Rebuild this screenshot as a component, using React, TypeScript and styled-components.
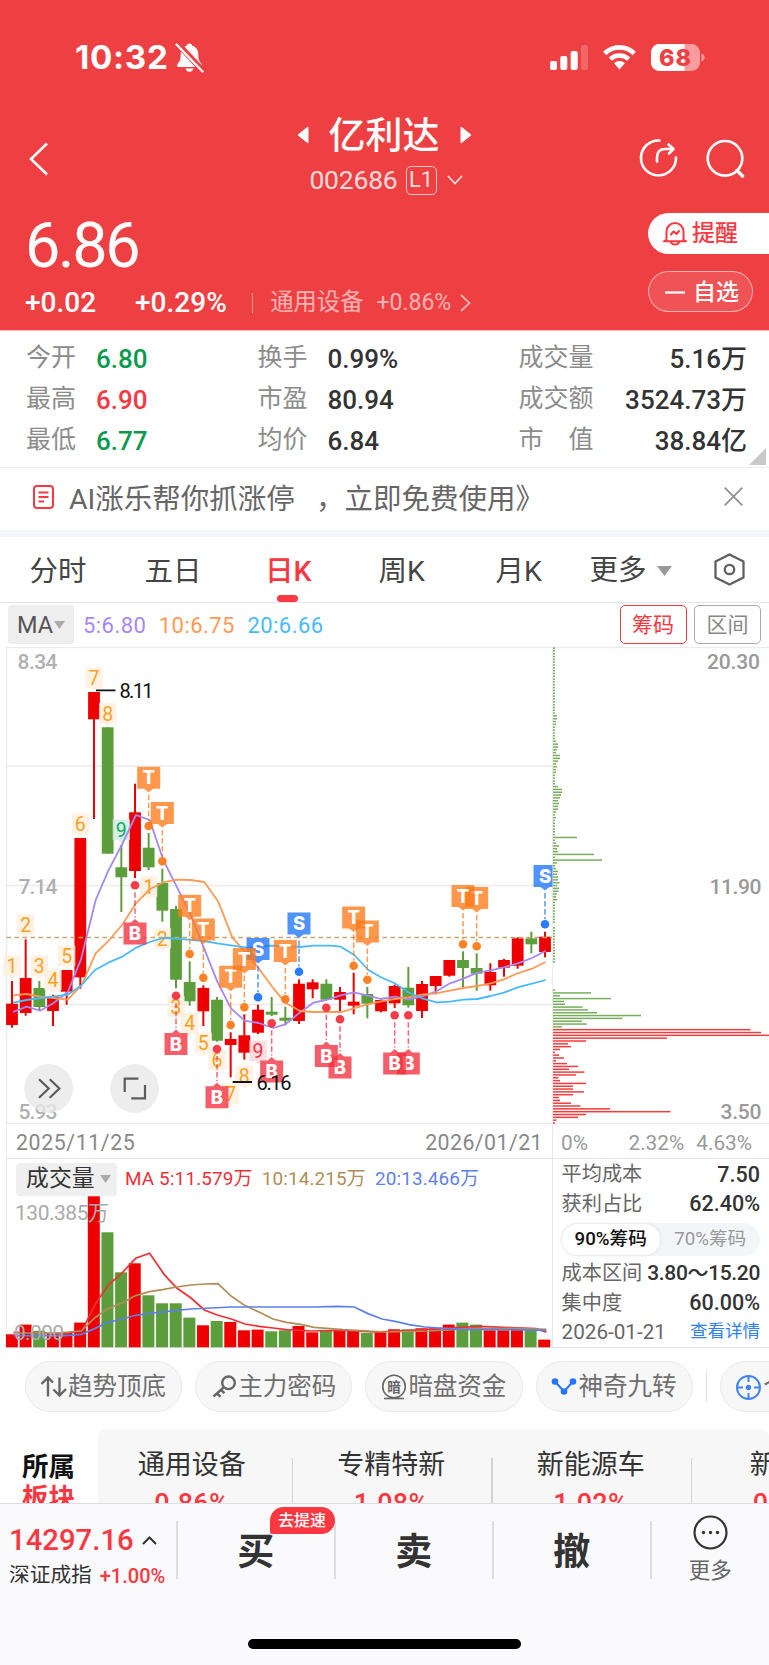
import React from "react";
import styled, { createGlobalStyle } from "styled-components";

const FONT = `Roboto, "Noto Sans CJK SC", sans-serif`;
const RED = "#ee4042";
const UP = "#f93842";
const BAR_UP = "#ee0000";
const BAR_DOWN = "#5d9e3c";

const Global = createGlobalStyle`
  * { box-sizing: border-box; }
  body { margin: 0; background: #fff; font-family: ${FONT}; }
  svg { display: block; flex: none; }
`;

const Page = styled.div`
  width: 769px;
  height: 1665px;
  overflow: hidden;
  display: flex;
  flex-direction: column;
  background: #fff;
  color: #333;
`;

type TextProps = { $size: number; $color?: string; $weight?: number; $ls?: number; $ml?: number };
const Text = styled.span<TextProps>`
  font-size: ${(p) => p.$size}px;
  line-height: 1;
  color: ${(p) => p.$color ?? "inherit"};
  font-weight: ${(p) => p.$weight ?? 400};
  letter-spacing: ${(p) => p.$ls ?? 0}px;
  margin-left: ${(p) => p.$ml ?? 0}px;
  white-space: pre;
`;

/* ---------- header ---------- */
const Header = styled.header`
  height: 331px;
  background: ${RED};
  border-bottom: 1px solid #fbb9ba;
  color: #fff;
  flex: none;
`;
const StatusBar = styled.div`
  height: 114px;
  padding: 1px 64px 0 75px;
  display: flex;
  align-items: center;
`;
const Clock = styled(Text)`
  font-family: Inter, sans-serif;
  margin-right: 6px;
`;
const StatusIcons = styled.div`
  margin-left: auto;
  display: flex;
  align-items: center;
  gap: 15px;
`;
const TitleBar = styled.div`
  height: 92px;
  padding: 0 24px 0 29px;
  display: grid;
  grid-template-columns: 99px 1fr 105px;
`;
const BackCell = styled.div`
  padding-top: 28px;
`;
const TitleCell = styled.div`
  display: flex;
  flex-direction: column;
  align-items: center;
`;
const NameRow = styled.div`
  display: flex;
  align-items: center;
  height: 41px;
  gap: 20px;
  & > span { padding-top: 4px; }
`;
const CodeRow = styled.div`
  display: flex;
  align-items: center;
  height: 30px;
  margin-top: 10px;
  padding-left: 4px;
`;
const LevelTag = styled.span`
  width: 31px;
  height: 29px;
  margin: 0 10px 0 8px;
  border: 1.5px solid rgba(255, 255, 255, 0.7);
  border-radius: 5px;
  display: flex;
  align-items: center;
  justify-content: center;
`;
const ActionCell = styled.div`
  display: flex;
  justify-content: flex-end;
  padding-top: 24px;
  gap: 28px;
`;
const QuoteRow = styled.div`
  height: 124px;
  padding-left: 25px;
  display: flex;
  justify-content: space-between;
`;
const PriceCol = styled.div`
  display: flex;
  flex-direction: column;
  padding-top: 8px;
`;
const ChangeRow = styled.div`
  display: flex;
  align-items: center;
  height: 30px;
  margin-top: 11px;
`;
const Rule = styled.i<{ $h: number; $c: string; $m?: string }>`
  width: 1.5px;
  height: ${(p) => p.$h}px;
  background: ${(p) => p.$c};
  margin: ${(p) => p.$m ?? 0};
  flex: none;
`;
const Faded = styled.span`
  display: flex;
  align-items: center;
  opacity: 0.6;
  & > svg { margin-left: 9px; }
`;
const SideButtons = styled.div`
  width: 121px;
  padding-top: 7px;
  display: flex;
  flex-direction: column;
  gap: 17px;
`;
const AlertButton = styled.button`
  height: 41px;
  border: 0;
  border-radius: 21px 0 0 21px;
  background: #fff;
  padding: 0 0 0 15px;
  display: flex;
  align-items: center;
  gap: 5px;
  font-family: inherit;
`;
const WatchButton = styled.button`
  width: 105px;
  height: 41px;
  border: 1px solid rgba(255, 255, 255, 0.55);
  border-radius: 21px;
  background: rgba(255, 255, 255, 0.1);
  color: #fff;
  padding: 1px 0 0 16px;
  display: flex;
  align-items: center;
  gap: 8px;
  font-family: inherit;
`;

/* ---------- figures ---------- */
const Stats = styled.section`
  height: 137px;
  padding: 6px 22px 0 26px;
  border-bottom: 1.5px solid #ebecee;
  display: grid;
  grid-template-columns: 231.5px 261px 1fr;
  position: relative;
  flex: none;
`;
const StatCol = styled.div`
  display: flex;
  flex-direction: column;
`;
const StatRow = styled.div<{ $gap: number; $spread?: boolean }>`
  height: 41px;
  display: flex;
  align-items: center;
  gap: ${(p) => p.$gap}px;
  justify-content: ${(p) => (p.$spread ? "space-between" : "flex-start")};
  & > span:last-child { padding-top: 3px; }
`;
const Corner = styled.svg`
  position: absolute;
  right: 3px;
  bottom: 2px;
`;

/* ---------- banner and tabs ---------- */
const Banner = styled.div`
  height: 69px;
  padding: 0 26px 5px 33px;
  border-bottom: 7px solid #f3f5f9;
  display: flex;
  align-items: center;
  flex: none;
`;
const BannerText = styled(Text)`
  margin: 7px auto 0 15px;
`;
const Tabs = styled.nav`
  height: 66px;
  padding: 0 24px 0 29.5px;
  border-bottom: 1.5px solid #e6e6e6;
  display: flex;
  align-items: center;
  flex: none;
`;
const Tab = styled.a<{ $w: number; $on?: boolean }>`
  width: ${(p) => p.$w}px;
  height: 66px;
  display: flex;
  flex-direction: column;
  color: ${(p) => (p.$on ? UP : "#444")};
  padding-top: 21px;
`;
const Mark = styled.i`
  width: 21px;
  height: 7px;
  border-radius: 3.5px;
  background: ${UP};
  margin: 9px 0 0 12px;
`;
const MoreTab = styled.div`
  display: flex;
  align-items: center;
  gap: 10px;
  margin-right: auto;
  padding-top: 3px;
  color: #444;
`;

/* ---------- chart ---------- */
const MaRow = styled.div`
  height: 44px;
  padding: 1px 8px 2px 8px;
  display: flex;
  align-items: center;
  flex: none;
`;
const MaSelect = styled.div`
  width: 66px;
  height: 39px;
  border-radius: 3px;
  background: #eee;
  display: flex;
  align-items: center;
  justify-content: center;
  gap: 1px;
  margin-right: 9px;
  & > span { padding-top: 2px; }
`;
const MaValues = styled.div`
  display: flex;
  gap: 12.5px;
  margin-right: auto;
  padding-top: 2px;
`;
const Toggle = styled.button<{ $c: string }>`
  width: 67px;
  height: 39px;
  border: 1.5px solid ${(p) => p.$c};
  border-radius: 5px;
  background: #fff;
  margin-left: 7.5px;
  padding: 1px 0 0;
  font-family: inherit;
`;
const ChartArea = styled.div`
  height: 477px;
  flex: none;
`;
const Lower = styled.div`
  display: grid;
  grid-template-columns: 546px 1fr;
  height: 224px;
  margin-left: 6px;
  border-left: 1px solid #ececec;
  border-bottom: 1px solid #e6e6e6;
  flex: none;
`;
const LowerLeft = styled.div`
  border-right: 1px solid #e8e8e8;
  display: flex;
  flex-direction: column;
`;
const DateRow = styled.div<{ $pad: string }>`
  height: 35px;
  flex: none;
  border-bottom: 1px solid #e8e8e8;
  padding: ${(p) => p.$pad};
  display: flex;
  align-items: center;
  justify-content: space-between;
  color: #888;
`;
const ScaleMid = styled(Text)`
  margin: 0 12px 0 auto;
`;
const VolumeHead = styled.div`
  height: 40px;
  flex: none;
  display: flex;
  align-items: center;
  padding: 0 0 0 9px;
`;
const VolumeSelect = styled.div`
  width: 101px;
  height: 33px;
  border-radius: 4px;
  background: #efefef;
  display: flex;
  align-items: center;
  gap: 5px;
  padding-left: 10px;
  margin-right: 8px;
`;
const ChipPanel = styled.div`
  display: flex;
  flex-direction: column;
`;
const ChipRow = styled.div<{ $h?: number }>`
  height: ${(p) => p.$h ?? 29.3}px;
  padding: 0 9px 0 8.5px;
  display: flex;
  align-items: center;
  justify-content: space-between;
`;
const Segment = styled.div`
  width: 199px;
  height: 33px;
  margin: 5px 0 3px 8px;
  border-radius: 17px;
  background: #f3f6f9;
  display: flex;
  flex: none;
`;
const SegmentItem = styled.div<{ $on?: boolean }>`
  flex: 1;
  border-radius: 17px;
  margin: 1px;
  display: flex;
  align-items: center;
  justify-content: center;
  background: ${(p) => (p.$on ? "#fff" : "transparent")};
  box-shadow: ${(p) => (p.$on ? "0 0 4px rgba(0,0,0,.1)" : "none")};
`;

/* ---------- shortcuts and sectors ---------- */
const Pills = styled.div`
  height: 81px;
  padding: 13px 0 0 25px;
  display: flex;
  flex: none;
  overflow: hidden;
`;
const Pill = styled.div`
  width: 157.2px;
  height: 51px;
  flex: none;
  margin-right: 13px;
  border: 1.5px solid #e9e9e9;
  border-radius: 26px;
  background: #f7f7f7;
  display: flex;
  align-items: center;
  padding: 1px 0 0 14px;
  color: #6f6f6f;
  gap: 1px;
`;
const Sectors = styled.div`
  height: 74px;
  display: flex;
  overflow: hidden;
  flex: none;
`;
const SectorTitle = styled.div`
  width: 98px;
  padding: 25px 0 0 22px;
  flex: none;
  display: flex;
  flex-direction: column;
  gap: 4px;
`;
const SectorList = styled.div`
  width: 671px;
  height: 90px;
  border-radius: 8px;
  background: #f7f7f7;
  display: flex;
  overflow: hidden;
`;
const Sector = styled.div<{ $first?: boolean }>`
  width: 199.5px;
  margin-left: ${(p) => (p.$first ? -6 : 0)}px;
  flex: none;
  display: flex;
  flex-direction: column;
  align-items: center;
  padding-top: 23px;
  gap: 12px;
`;

/* ---------- trade bar ---------- */
const TradeBar = styled.footer`
  height: 162px;
  border-top: 1.5px solid #dcdde1;
  background: #fafafc;
  display: flex;
  flex-direction: column;
  flex: none;
`;
const TradeRow = styled.div`
  height: 135px;
  display: flex;
  padding-top: 17px;
`;
const IndexCell = styled.div`
  width: 177px;
  padding: 5px 0 0 9px;
`;
const IndexLine = styled.div<{ $gap: number; $top: number }>`
  display: flex;
  align-items: center;
  gap: ${(p) => p.$gap}px;
  margin-top: ${(p) => p.$top}px;
`;
const TradeCell = styled.div`
  width: 156.5px;
  height: 58px;
  display: flex;
  justify-content: center;
  padding-top: 13px;
  position: relative;
`;
const Badge = styled.span`
  position: absolute;
  left: 92px;
  top: -14px;
  width: 65px;
  height: 27px;
  border-radius: 14px 14px 14px 2px;
  background: ${UP};
  display: flex;
  align-items: center;
  justify-content: center;
`;
const MoreCell = styled.div`
  flex: 1;
  display: flex;
  flex-direction: column;
  align-items: center;
  gap: 10px;
  margin-top: -6px;
`;
const HomeBar = styled.i`
  width: 273px;
  height: 10px;
  border-radius: 5px;
  background: #000;
  margin-left: 248px;
`;

const Caret = ({ w, h, c }: { w: number; h: number; c: string }) => (
  <svg width={w} height={h} viewBox="0 0 10 10" preserveAspectRatio="none">
    <path d="M0 0H10L5 10Z" fill={c} />
  </svg>
);

/* Daily bars: direction, high, open/close top, open/close bottom, low */
type Candle = [1 | 0, number, number, number, number];
const CANDLES: Candle[] = [
  [1, 334, 356.7, 378, 380.7], [1, 292.3, 331, 366, 368.7], [0, 334, 341, 360, 363.7],
  [1, 347.7, 350, 364, 379], [1, 323, 323, 344.7, 357.7], [1, 191, 191, 330.3, 341.7],
  [1, 45, 45, 72.3, 172], [0, 80.3, 80.3, 206.7, 206.7], [0, 198, 220.3, 230.3, 265],
  [1, 136.7, 165.3, 224, 231], [0, 186, 200.7, 220.3, 223], [0, 221.7, 236, 263.7, 274.7],
  [0, 259, 262, 332.7, 341.3], [0, 314.3, 335, 354.3, 358.7], [1, 338.3, 341, 364.3, 379],
  [0, 350, 352.7, 393.7, 394.7], [1, 385.3, 392, 398, 430.3], [1, 367.3, 388.3, 405.7, 412.7],
  [1, 357.7, 362.7, 385.7, 387], [0, 350, 364.7, 367.7, 369], [0, 359.7, 370.7, 373.7, 378.3],
  [1, 332.3, 336.7, 374, 377], [1, 332.3, 335.3, 342.3, 351.3], [0, 332.3, 336.7, 352.7, 352.7],
  [1, 340, 345, 352.7, 365], [1, 325.7, 354.7, 358.7, 367.3], [0, 340, 347, 356.7, 371.3],
  [1, 352.3, 353, 364.3, 365.3], [1, 337.7, 339, 356.3, 361], [0, 320, 340.7, 358.3, 360.7],
  [1, 334, 337, 364, 371], [1, 329, 329, 339, 347.3], [1, 313, 313, 328.7, 329.7],
  [0, 304.3, 313, 321, 340], [0, 306.3, 321, 326.7, 343.7], [1, 316.3, 325, 338.3, 343.7],
  [1, 312, 313, 320.7, 329.7], [1, 290.3, 291.3, 318.7, 321.7], [0, 284.7, 291.3, 297.3, 306.3],
  [1, 284.7, 289.7, 305, 310.3],
];
const MA5 = "13,365 26.7,359.7 40,363.7 53.3,356.3 68,344.7 81,312.3 95.7,253 108.3,223.7 122.3,197 136,168 149.7,173 163.3,213 176.7,239.7 190,266.3 203.7,300.3 217.3,334.7 231,361.3 244.7,373.7 258.7,376 273.3,381 285.3,377.3 299,366.3 313.3,355.7 326.3,353 340,348.7 353.7,345.3 367.3,348.3 381,352 394.7,349.7 408.3,352.3 422,349.7 435.7,344.7 450,336.3 463.3,331.7 477.3,325.7 490.7,323.3 504,320.3 517.7,316.3 532,311 545.7,303.7";
const MA10 = "13,348.3 26.7,347 40,349.7 53.3,351 67.7,352.7 81.7,338 95.7,306.3 110,292.3 122.7,277 136,256.3 149.7,242.3 163.3,235.3 177,232.7 190.7,233 204.3,235 218.3,254.7 232.3,290.3 244.7,304.7 258.7,321.3 273.3,341.3 285.3,355.7 300,364 313.3,365 341.7,365 353.7,361.3 367.3,357.3 381,354.3 394.7,352 408.3,350.3 422,347.7 435.7,346.3 450,343.7 463.3,341 477.3,339 490.7,336.3 504,332.3 517.7,326.3 532,321.7 545.7,315";
const MA20 = "13,355.7 26.7,353 67.7,347.7 81,338.7 95,323 108.3,315.7 122.3,309.7 136,300.7 149.7,295 163.3,291 176.7,291.7 203.7,294 217.3,296.3 231,298.3 246.7,300.7 271.7,298.7 300,300 313.3,298.7 330,298.7 340.7,299.7 354.3,308 368.3,323 381,330.3 394.7,336.3 408.3,345.3 422,351.3 436.7,355.3 450,354.7 463.3,352.7 477.3,352 490.7,349 504,345.7 517.7,340.3 532,336.7 545.7,333";

/* Sequence counters: text, candle index, centre y */
const COUNTERS: [string, number, number, string?][] = [
  ["1", 0, 318.7], ["2", 1, 277.7], ["3", 2, 318.7], ["4", 3, 333], ["5", 4, 309], ["6", 5, 177],
  ["7", 6, 31], ["8", 7, 66.5], ["9", 8, 183, "g"], ["1", 10, 239.7], ["2", 11, 291.7],
  ["3", 12, 359.7], ["4", 13, 376], ["5", 14, 396], ["6", 15, 413], ["7", 16, 447], ["8", 17, 429], ["9", 18, 404, "r"],
];
/* Trade signals: kind, candle index, dot y */
const SIGNALS: ["T" | "S" | "B", number, number][] = [
  ["B", 9, 238.3], ["B", 12, 348.7], ["B", 15, 402], ["B", 19, 376.3], ["B", 24, 372.3], ["B", 23, 360.7],
  ["B", 29, 368.3], ["B", 28, 368.3],
  ["T", 10, 179], ["T", 11, 214.3], ["T", 13, 307], ["T", 14, 330.7], ["T", 16, 378],
  ["S", 18, 350.3], ["T", 17, 360.3], ["T", 20, 352.3], ["S", 21, 324.7], ["T", 26, 332.7], ["T", 25, 318.7],
  ["T", 34, 299.3], ["T", 33, 297.3], ["S", 39, 277.3],
];
/* Share held at each price level, top to bottom */
const CHIPS = [
  ...Array(24).fill(2), 4, 4, 3, 3, 2, 2, 2, 2, 2, 3, 5, 5, 4, 3, 7, 7, 5, 3, 4, 3, 3, 2, 2, 2, 2, 5, 9, 9, 8, 7, 5, 6, 5, 5, 3,
  2, 3, 2, 2, 2, 2, 2, 2, 24, 2, 3, 6, 4, 5, 41, 2, 49, 4, 2, 3, 5, 4, 5, 5, 6.5, 4, 6, 5.5, 4, 3, 4,
  2, 2, 2, 2, 2, 2, 2, 2, 0, ...Array(13).fill(2), ...Array(9).fill(0),
  2, 38, 7, 58, 11, 12, 29.5, 35, 44, 88, 69.5, 29, 34, 9,
  197.5, 208, 216, 114, 33, 15, 18, 7, 2, 6, 11, 3, 14, 25, 16, 31.5, 23, 5.5, 7, 33, 20, 20, 31, 20, 6, 7, 18, 27.5, 57, 117.5, 33, 25, 3.5, 2,
];
const FIRST_PROFIT_ROW = 135;

const cx = (i: number) => 12 + i * 13.667;

const Signal = ({ kind, i, dot }: { kind: "T" | "S" | "B"; i: number; dot: number }) => {
  const x = cx(i);
  const fill = kind === "T" ? "#ff7a1a" : kind === "S" ? "#1e74ff" : "#f5303f";
  const top = kind === "B" ? dot + 37.3 : dot - 59.3;
  const body =
    kind === "B"
      ? `M${x - 11.5} ${top}H${x - 4}L${x} ${top - 3.5}L${x + 4} ${top}H${x + 11.5}V${top + 22}H${x - 11.5}Z`
      : `M${x - 11.5} ${top}H${x + 11.5}V${top + 22}H${x + 4.5}L${x} ${top + 25.5}L${x - 4.5} ${top + 22}H${x - 11.5}Z`;
  const [y1, y2] = kind === "B" ? [dot + 7, top - 5] : [top + 28, dot - 5];
  return (
    <g>
      <line x1={x} x2={x} y1={y1} y2={y2} stroke={fill} strokeOpacity=".75" strokeWidth="1.5" strokeDasharray="5.5 2.5" />
      <path d={body} fill={fill} fillOpacity=".78" />
      <text x={x} y={top + 17.5} fill="#fff" fontSize="18.5" fontWeight="800" textAnchor="middle" fontFamily="Inter">
        {kind}
      </text>
      <circle cx={x} cy={dot} r="4.3" fill={fill} fillOpacity=".95" />
    </g>
  );
};

const PriceChart = () => (
  <svg width="769" height="477" viewBox="0 0 769 477" fontFamily="Roboto">
    <g stroke="#ebebeb" strokeWidth="1.3">
      <path d="M6.5 .5H769M6.5 119H552.5M6.5 238.5H552.5M6.5 357.5H552.5M6.5 476.5H769M6.5 0V477M552.5 0V477" fill="none" />
    </g>
    {CHIPS.map((w, k) =>
      w ? (
        <rect key={k} x="553" y={0.3 + k * 2.827} width={w} height="1.5" fill={k < FIRST_PROFIT_ROW ? "#79ae5e" : "#f13d3d"} />
      ) : null
    )}
    <g fontSize="21" fontWeight="500" fill="#b0b0b0">
      <text x="17.5" y="22.2" textLength="40">8.34</text>
      <text x="18.5" y="247.2" textLength="39">7.14</text>
      <text x="18.5" y="471.7" textLength="39">5.93</text>
      <g fill="#999" textAnchor="end">
        <text x="760" y="22.2" textLength="53">20.30</text>
        <text x="761.500" y="247.2" textLength="52">11.90</text>
        <text x="761.500" y="471.7" textLength="41">3.50</text>
      </g>
    </g>
    {CANDLES.map(([up, hi, top, bot, lo], i) => (
      <g key={i} fill={up ? BAR_UP : BAR_DOWN}>
        <rect x={cx(i) - 1} y={hi} width="2" height={lo - hi} />
        <rect x={cx(i) - 5.9} y={top} width="11.8" height={bot - top} />
      </g>
    ))}
    {COUNTERS.map(([n, i, y, tone], k) => (
      <g key={k}>
        <path
          d={`M${cx(i) - 8.7} ${y - 10.5}h17.4v20.5h-5.5l-3.2 3l-3.2-3h-5.5z`}
          fill={tone === "g" ? "#c9ecdd" : tone === "r" ? "#ffd3d6" : "#ffeedb"}
          fillOpacity=".75"
        />
        <text x={cx(i)} y={y + 7} fontSize="19.5" textAnchor="middle" fill={tone === "g" ? "#12a866" : tone === "r" ? "#f5303f" : "#f9a11b"}>
          {n}
        </text>
      </g>
    ))}
    <line x1="6.5" x2="552" y1="290.5" y2="290.5" stroke="#c9a56c" strokeWidth="1.6" strokeDasharray="4.5 3.5" />
    <g fill="none" strokeWidth="1.8" strokeLinejoin="round">
      <polyline points={MA5} stroke="#a587f5" />
      <polyline points={MA10} stroke="#fd9a55" />
      <polyline points={MA20} stroke="#48baf9" />
    </g>
    <clipPath id="plot">
      <rect x="6" y="0" width="546.5" height="477" />
    </clipPath>
    <g clipPath="url(#plot)">
      {SIGNALS.map(([k, i, y], n) => (
        <Signal key={n} kind={k} i={i} dot={y} />
      ))}
    </g>
    <path d="M96 43.3h19.5M232.7 435H252" stroke="#111" strokeWidth="1.8" />
    <g fontSize="20" fill="#111">
      <text x="119.5" y="51" textLength="34">8.11</text>
      <text x="256.5" y="442.5" textLength="35">6.16</text>
    </g>
    <g fill="#e8e8e8" fillOpacity=".8">
      <circle cx="48.7" cy="441.5" r="24.4" />
      <circle cx="134.5" cy="441.5" r="24.4" />
    </g>
    <path d="M39 432.2l9.7 9.3l-9.7 9.3M49.7 432.2l9.7 9.3l-9.7 9.3M124.7 445v-13.3h13.7M131.3 451.3h13.7v-13.3" fill="none" stroke="#5c5c5c" strokeWidth="2.2" />
  </svg>
);

/* Volume bars: direction and height in pixels */
const VOLUMES: [1 | 0, number][] = [
  [1, 13], [1, 22.7], [0, 16.5], [1, 14.5], [1, 15], [1, 24.7], [1, 151], [0, 115], [0, 75], [1, 84], [0, 52], [0, 44],
  [0, 44], [0, 29.7], [1, 22], [0, 26.3], [1, 25.3], [1, 17], [1, 17.7], [0, 16], [0, 17], [1, 21.3], [1, 15], [0, 17],
  [1, 16.3], [1, 16.3], [0, 14.3], [1, 15], [1, 18], [0, 18], [1, 19], [1, 19], [1, 22.7], [0, 24.7], [0, 22.7], [1, 17],
  [1, 17], [1, 17.3], [0, 18], [1, 7.7],
];
/* Averages as [x, height above the baseline] */
const VOL_MA: [string, number[][]][] = [
  ["#ee2f37", [[13.6, 15.3], [25, 14.3], [64.3, 13.3], [82, 17], [96.4, 45], [108.2, 62], [122, 74.3], [135.7, 89], [149.6, 94], [164.3, 72.7], [176.8, 59.3], [191, 49.3], [204.3, 37.3], [217.9, 32], [231.4, 28.3], [245, 23.3], [259, 21], [273, 19.3], [286.4, 17.7], [311, 16.3], [339, 17], [375, 15.3], [411, 17], [443, 19], [480, 21], [511, 19.7], [536, 18.7], [546.4, 15]]],
  ["#b08d57", [[13.6, 14.3], [57, 14.3], [81.4, 16.3], [94.6, 29.3], [108.2, 38.7], [122, 44.3], [135.7, 51.7], [149.6, 55.7], [162.5, 57.7], [176.8, 60.3], [191, 62.3], [204.3, 63.3], [217.9, 63.7], [231.4, 51], [245, 41.7], [259, 35.3], [273, 28.3], [286.4, 25], [302, 22.7], [314, 20], [343, 17.7], [386, 15.3], [429, 16.3], [471, 18.7], [514, 19], [546.4, 18]]],
  ["#5f7fe8", [[13.6, 11.7], [64.3, 11.7], [81.4, 13], [94.6, 18.7], [108.2, 25], [122, 28.3], [135.7, 32], [149.6, 34], [176.8, 37], [191, 38.3], [231.4, 40.3], [286, 40.3], [314, 40.3], [337.5, 41], [354.3, 40.3], [368, 33.7], [382, 28.3], [396.4, 25.7], [409, 22.7], [425, 20.3], [446.4, 18.7], [464, 17.7], [500, 17.7], [546.4, 17]]],
];
const VolumeChart = () => (
  <svg width="546" height="148" viewBox="7 40.7 546 148" overflow="visible" fontFamily={FONT}>
    {VOLUMES.map(([up, h], i) => (
      <rect key={i} x={5.9 + i * 13.65} y={189 - h} width="12" height={h} fill={up ? BAR_UP : BAR_DOWN} />
    ))}
    {VOL_MA.map(([c, pts]) => (
      <polyline key={c} points={pts.map(([x, h]) => `${x},${189 - h}`).join(" ")} fill="none" stroke={c} strokeWidth="1.7" />
    ))}
    <g fontSize="21" fill="#aaa">
      <text x="15" y="62" textLength="94">130.385万</text>
      <text x="14" y="182" textLength="50">0.000</text>
    </g>
  </svg>
);

const STATS_LEFT = [["今开", "6.80", "#0a9a4e"], ["最高", "6.90", UP], ["最低", "6.77", "#0a9a4e"]];
const STATS_MID = [["换手", "0.99%"], ["市盈", "80.94"], ["均价", "6.84"]];
const STATS_RIGHT = [["成交量", "5.16万"], ["成交额", "3524.73万"], ["市　值", "38.84亿"]];
const SECTORS = [["通用设备", "0.86%"], ["专精特新", "1.08%"], ["新能源车", "1.02%"], ["新材料", "0.62%"]];

export default function App() {
  return (
    <Page>
      <Global />
      <Header>
        <StatusBar>
          <Clock $size={33.2} $weight={700} $ls={0.7}>10:32</Clock>
          <svg width="29" height="31" viewBox="0 0 29 31">
            <path d="M14.5 1.5c1.6 0 2.6 1 2.8 2.2c4 1.3 6 4.6 6 8.8c0 6 1.5 7.5 3.2 9.5c1 1.4.4 3-1.3 3H3.8c-1.7 0-2.3-1.6-1.3-3c1.7-2 3.2-3.5 3.2-9.5c0-4.200 2-7.500 6-8.800c.2-1.200 1.200-2.200 2.800-2.200zM10.500 26.500h8c-.5 2-2 3.300-4 3.300s-3.500-1.300-4-3.300z" fill="#fff" />
            <path d="M2.500 1.500L27.500 28.500" stroke={RED} strokeWidth="6" />
            <path d="M1.500 2.500L27.500 29.500" stroke="#fff" strokeWidth="2.300" strokeLinecap="round" />
          </svg>
          <StatusIcons>
            <svg width="38" height="25" viewBox="0 0 38 25" fill="#fff">
              <rect y="16" width="7" height="9" rx="2" />
              <rect x="10.300" y="11" width="7" height="14" rx="2" />
              <rect x="20.700" y="6" width="7" height="19" rx="2" />
              <rect x="31" y="0" width="7" height="25" rx="2" opacity=".2" />
            </svg>
            <svg width="33" height="25" viewBox="0 0 33 25" fill="none" stroke="#fff" strokeWidth="4.600">
              <path d="M1.700 8.500C10 .3 23 .3 31.300 8.500" />
              <path d="M7.300 14.200C12.500 9.200 20.500 9.200 25.700 14.200" />
              <path d="M11 18.200c3.300-2.900 7.700-2.900 11 0L16.500 24.500z" fill="#fff" stroke="none" />
            </svg>
            <svg width="54" height="27" viewBox="0 0 54 27">
              <rect width="49" height="27" rx="8.500" fill="#f89c9d" />
              <path d="M8.500 0H33.500V27H8.500A8.500 8.500 0 0 1 0 18.500V8.500A8.500 8.500 0 0 1 8.500 0Z" fill="#fff" />
              <path d="M50.500 9.500c2.200.8 3.200 2.200 3.200 4s-1 3.200-3.200 4z" fill="#f89c9d" />
              <text x="24" y="22" fontSize="23.500" fontWeight="800" fontFamily="Inter" fill={RED} textAnchor="middle" textLength="32">68</text>
            </svg>
          </StatusIcons>
        </StatusBar>
        <TitleBar>
          <BackCell>
            <svg width="20" height="34" viewBox="0 0 20 34"><path d="M18 1.500L2 17L18 32.500" fill="none" stroke="#fff" strokeWidth="2.600" /></svg>
          </BackCell>
          <TitleCell>
            <NameRow>
              <svg width="12" height="18" viewBox="0 0 12 18"><path d="M11 1V17L1 9Z" fill="#fff" stroke="#fff" strokeLinejoin="round" /></svg>
              <Text $size={37} $weight={500}>亿利达</Text>
              <svg width="12" height="18" viewBox="0 0 12 18"><path d="M1 1V17L11 9Z" fill="#fff" stroke="#fff" strokeLinejoin="round" /></svg>
            </NameRow>
            <CodeRow>
              <Text $size={26.5} $ls={-0.2} $color="rgba(255,255,255,.82)">002686</Text>
              <LevelTag><Text $size={22} $color="rgba(255,255,255,.85)">L1</Text></LevelTag>
              <svg width="16" height="10" viewBox="0 0 16 10"><path d="M1 1L8 8.500L15 1" fill="none" stroke="#fff" strokeOpacity=".85" strokeWidth="1.700" /></svg>
            </CodeRow>
          </TitleCell>
          <ActionCell>
            <svg width="40" height="40" viewBox="0 0 40 40" fill="none" stroke="#fff" strokeWidth="2.600" strokeLinecap="round" strokeLinejoin="round">
              <path d="M21.500 2.500A17.500 17.500 0 1 0 38 19.500" />
              <path d="M19 23.500v-4c0-6 3-8.500 8.500-8.500h7M30.500 6.500l5 4.500l-4.500 4.500" />
            </svg>
            <svg width="39" height="40" viewBox="0 0 39 40" fill="none" stroke="#fff" strokeWidth="2.600">
              <circle cx="19" cy="20.300" r="17.300" /><path d="M31 32.500L36.500 38" strokeWidth="3.400" strokeLinecap="round" />
            </svg>
          </ActionCell>
        </TitleBar>
        <QuoteRow>
          <PriceCol>
            <Text $size={63} $weight={450} $ls={-2.4}>6.86</Text>
            <ChangeRow>
              <Text $size={28} $weight={500}>+0.02</Text>
              <Text $size={28} $weight={500} $ml={39}>+0.29%</Text>
              <Rule $h={20} $c="rgba(255,255,255,.45)" $m="0 17px 0 25px" />
              <Faded>
                <Text $size={23.3}>通用设备</Text>
                <Text $size={23} $ml={13}>+0.86%</Text>
                <svg width="11" height="18" viewBox="0 0 11 18"><path d="M1 1L9.500 9L1 17" fill="none" stroke="#fff" strokeWidth="1.800" /></svg>
              </Faded>
            </ChangeRow>
          </PriceCol>
          <SideButtons>
            <AlertButton>
              <svg width="24" height="25" viewBox="0 0 24 25" fill="none" stroke={UP} strokeWidth="2" strokeLinecap="round" strokeLinejoin="round">
                <path d="M3.500 19V10.500a8.500 8.500 0 0 1 17 0V19L23 20.300H1L3.500 19M8 21.500c1.500 2.800 6.500 2.800 8 0" />
                <path d="M8 13.500l2.500-3l3 2.500l2.500-3" />
              </svg>
              <Text $size={23} $weight={500} $color={UP}>提醒</Text>
            </AlertButton>
            <WatchButton>
              <svg width="20" height="3"><rect width="20" height="2.200" y=".4" fill="#fff" /></svg>
              <Text $size={23} $weight={500}>自选</Text>
            </WatchButton>
          </SideButtons>
        </QuoteRow>
      </Header>

      <Stats>
        <StatCol>
          {STATS_LEFT.map(([k, v, c]) => (
            <StatRow key={k} $gap={20}><Text $size={25} $color="#8c8c8c">{k}</Text><Text $size={26} $weight={500} $color={c}>{v}</Text></StatRow>
          ))}
        </StatCol>
        <StatCol>
          {STATS_MID.map(([k, v]) => (
            <StatRow key={k} $gap={20}><Text $size={25} $color="#8c8c8c">{k}</Text><Text $size={26} $weight={500}>{v}</Text></StatRow>
          ))}
        </StatCol>
        <StatCol>
          {STATS_RIGHT.map(([k, v]) => (
            <StatRow key={k} $gap={0} $spread><Text $size={25} $color="#8c8c8c">{k}</Text><Text $size={26} $weight={500}>{v}</Text></StatRow>
          ))}
        </StatCol>
        <Corner width="17" height="17" viewBox="0 0 17 17"><path d="M17 0V17H0Z" fill="#c9c9c9" /></Corner>
      </Stats>

      <Banner>
        <svg width="21" height="24" viewBox="0 0 21 24" fill="none" stroke={UP} strokeWidth="2">
          <rect x="1" y="1" width="19" height="22" rx="3" /><path d="M5.500 7.500h10M5.500 12h10M5.500 16.500h5.500" />
        </svg>
        <BannerText $size={28.5} $color="#666">AI涨乐帮你抓涨停   ，立即免费使用》</BannerText>
        <svg width="19" height="19" viewBox="0 0 19 19"><path d="M.7.7L18.300 18.300M18.300.7L.7 18.300" stroke="#8f8f8f" strokeWidth="1.700" /></svg>
      </Banner>

      <Tabs>
        <Tab $w={115}><Text $size={28.5}>分时</Text></Tab>
        <Tab $w={120.5}><Text $size={28.5}>五日</Text></Tab>
        <Tab $w={113.5} $on><Text $size={28.5} $weight={500}>日K</Text><Mark /></Tab>
        <Tab $w={117}><Text $size={28.5}>周K</Text></Tab>
        <Tab $w={94}><Text $size={28.5}>月K</Text></Tab>
        <MoreTab><Text $size={28.5}>更多</Text><Caret w={15} h={10} c="#999" /></MoreTab>
        <svg width="31" height="33" viewBox="0 0 31 33" fill="none" stroke="#606060" strokeWidth="2.300" strokeLinejoin="round">
          <path d="M15.500 1.500L29.500 8.500V24.500L15.500 31.500L1.500 24.500V8.500Z" /><circle cx="15.500" cy="16.500" r="4.700" />
        </svg>
      </Tabs>

      <MaRow>
        <MaSelect><Text $size={23.5} $color="#555">MA</Text><Caret w={11} h={8} c="#aaa" /></MaSelect>
        <MaValues>
          <Text $size={22} $color="#a587f5" $ls={0.45}>5:6.80</Text>
          <Text $size={22} $color="#fd9a55" $ls={0.45}>10:6.75</Text>
          <Text $size={22} $color="#48baf9" $ls={0.45}>20:6.66</Text>
        </MaValues>
        <Toggle $c={UP}><Text $size={21} $color={UP}>筹码</Text></Toggle>
        <Toggle $c="#aaa"><Text $size={21} $color="#888">区间</Text></Toggle>
      </MaRow>

      <ChartArea><PriceChart /></ChartArea>

      <Lower>
        <LowerLeft>
          <DateRow $pad="4px 9px 0 9px">
            <Text $size={21.3} $ls={0.6}>2025/11/25</Text>
            <Text $size={21.3} $ls={0.45}>2026/01/21</Text>
          </DateRow>
          <VolumeHead>
            <VolumeSelect><Text $size={22.9} $color="#333">成交量</Text><Caret w={11} h={8} c="#aaa" /></VolumeSelect>
            <Text $size={18.9} $ls={0.15} $color="#ee2f37">MA 5:11.579万</Text>
            <Text $size={18.9} $ls={0.15} $ml={9} $color="#b08d57">10:14.215万</Text>
            <Text $size={18.9} $ls={0.15} $ml={9} $color="#5f7fe8">20:13.466万</Text>
          </VolumeHead>
          <VolumeChart />
        </LowerLeft>
        <ChipPanel>
          <DateRow $pad="4px 17px 0 8px">
            <Text $size={20.8} $color="#999">0%</Text>
            <ScaleMid $size={20.8} $color="#999">2.32%</ScaleMid>
            <Text $size={20.8} $color="#999">4.63%</Text>
          </DateRow>
          <ChipRow $h={30.5}><Text $size={20.2} $color="#666">平均成本</Text><Text $size={21.5} $weight={500}>7.50</Text></ChipRow>
          <ChipRow $h={28.3}><Text $size={20.2} $color="#666">获利占比</Text><Text $size={21.5} $weight={500}>62.40%</Text></ChipRow>
          <Segment>
            <SegmentItem $on><Text $size={18.7} $weight={500} $color="#111">90%筹码</Text></SegmentItem>
            <SegmentItem><Text $size={18.7} $color="#999">70%筹码</Text></SegmentItem>
          </Segment>
          <ChipRow><Text $size={20.2} $color="#666">成本区间</Text><Text $size={21} $weight={500} $ls={-0.35}>3.80～15.20</Text></ChipRow>
          <ChipRow><Text $size={20.2} $color="#666">集中度</Text><Text $size={21.5} $weight={500}>60.00%</Text></ChipRow>
          <ChipRow><Text $size={20.7} $color="#666">2026-01-21</Text><Text $size={17.5} $color="#2f80f5">查看详情</Text></ChipRow>
        </ChipPanel>
      </Lower>

      <Pills>
        <Pill>
          <svg width="27" height="24" viewBox="0 0 27 24" fill="none" stroke="#666" strokeWidth="2.400"><path d="M8 21.500V2.500M1.500 9L8 2.500L13 7.500M19.500 2.500V20.500M13.500 14.500L19.500 20.500L26 14" /></svg>
          <Text $size={24.5}>趋势顶底</Text>
        </Pill>
        <Pill>
          <svg width="27" height="24" viewBox="-2 0 27 24" fill="none" stroke="#666" strokeWidth="2.400"><circle cx="16.500" cy="7.800" r="6.300" /><path d="M12 12.200L1.500 21.500M5 18.500l3.500 3.200M9 15l3.500 3.200" /></svg>
          <Text $size={24.5}>主力密码</Text>
        </Pill>
        <Pill>
          <svg width="27" height="26" viewBox="-1 0 27 26" fill="none" stroke="#666" strokeWidth="1.600">
            <circle cx="13" cy="12.500" r="11.300" /><path d="M3 24.500h20" />
            <text x="13" y="17.600" fontSize="13.500" fontWeight="700" textAnchor="middle" fill="#666" stroke="none">暗</text>
          </svg>
          <Text $size={24.5}>暗盘资金</Text>
        </Pill>
        <Pill>
          <svg width="27" height="24" viewBox="0 0 27 24" fill="#2475ff"><circle cx="4" cy="6.500" r="3.300" /><circle cx="13" cy="16.500" r="3.300" /><circle cx="22" cy="6.500" r="3.300" /><path d="M4 6.500L13 16.500L22 6.500" fill="none" stroke="#2475ff" strokeWidth="2" /></svg>
          <Text $size={24.5}>神奇九转</Text>
        </Pill>
        <Rule $h={32} $c="#e2e2e2" $m="9px 13px 0 0" />
        <Pill>
          <svg width="27" height="27" viewBox="0 0 27 27" fill="none" stroke="#3d83f7" strokeWidth="2"><circle cx="13.500" cy="13.500" r="11.500" /><path d="M13.500 2v6M13.500 19v6M2 13.500h6M19 13.500h6" /><circle cx="13.500" cy="13.500" r="1.700" fill="#3d83f7" /></svg>
          <Text $size={24.5}>个股诊断</Text>
        </Pill>
      </Pills>

      <Sectors>
        <SectorTitle>
          <Text $size={26.5} $weight={700} $color="#111">所属</Text>
          <Text $size={26.5} $weight={700} $color={UP}>板块</Text>
        </SectorTitle>
        <SectorList>
          {SECTORS.map(([name, pct], i) => (
            <React.Fragment key={name}>
              {i > 0 && <Rule $h={60} $c="#d3d3d3" $m="29px -1.5px 0 0" />}
              <Sector $first={i === 0}>
                <Text $size={27}>{name}</Text>
                <Text $size={27} $weight={500} $ls={0.3} $color={UP}>{pct}</Text>
              </Sector>
            </React.Fragment>
          ))}
        </SectorList>
      </Sectors>

      <TradeBar>
        <TradeRow>
          <IndexCell>
            <IndexLine $gap={8} $top={0}>
              <Text $size={29.3} $weight={500} $color={UP}>14297.16</Text>
              <svg width="15" height="9" viewBox="0 0 15 9"><path d="M1 8L7.500 1.500L14 8" fill="none" stroke="#333" strokeWidth="2" /></svg>
            </IndexLine>
            <IndexLine $gap={8} $top={10}>
              <Text $size={20.7}>深证成指</Text>
              <Text $size={20} $weight={500} $color={UP}>+1.00%</Text>
            </IndexLine>
          </IndexCell>
          <Rule $h={58} $c="#dcdde0" $m="0 0 0 -1px" />
          <TradeCell><Text $size={37} $weight={700}>买</Text><Badge><Text $size={16} $weight={500} $color="#fff">去提速</Text></Badge></TradeCell>
          <Rule $h={58} $c="#dcdde0" />
          <TradeCell><Text $size={37} $weight={700}>卖</Text></TradeCell>
          <Rule $h={58} $c="#dcdde0" />
          <TradeCell><Text $size={37} $weight={700}>撤</Text></TradeCell>
          <Rule $h={58} $c="#dcdde0" />
          <MoreCell>
            <svg width="35" height="35" viewBox="0 0 35 35"><circle cx="17.500" cy="17.500" r="16" fill="none" stroke="#333" strokeWidth="2.200" /><g fill="#333"><circle cx="10.500" cy="17.500" r="1.700" /><circle cx="17.500" cy="17.500" r="1.700" /><circle cx="24.500" cy="17.500" r="1.700" /></g></svg>
            <Text $size={21.5} $color="#666">更多</Text>
          </MoreCell>
        </TradeRow>
        <HomeBar />
      </TradeBar>
    </Page>
  );
}
